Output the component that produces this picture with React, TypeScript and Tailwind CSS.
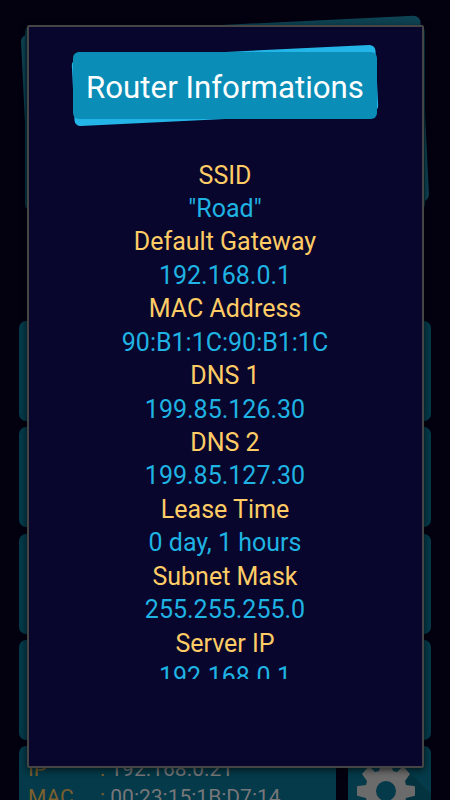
import type { ReactNode } from "react";

const routerInfo = [
  { label: "SSID", value: '"Road"' },
  { label: "Default Gateway", value: "192.168.0.1" },
  { label: "MAC Address", value: "90:B1:1C:90:B1:1C" },
  { label: "DNS 1", value: "199.85.126.30" },
  { label: "DNS 2", value: "199.85.127.30" },
  { label: "Lease Time", value: "0 day, 1 hours" },
  { label: "Subnet Mask", value: "255.255.255.0" },
  { label: "Server IP", value: "192.168.0.1" },
];

export default function App() {
  return (
    <main className="relative h-[800px] w-[450px] overflow-hidden bg-[#030110] font-['Roboto',sans-serif]">
      <DeviceList />
      <div className="absolute inset-0 flex justify-center pt-[25px]">
        <RouterDialog />
      </div>
    </main>
  );
}

function DeviceList() {
  return (
    <div className="flex flex-col px-[19px] pt-[25px]">
      <Tilted
        className="mx-1.5 h-[186px]"
        back="rounded-[7px] bg-[#0e4353]"
        front="rounded-[7px] bg-[#053746]"
      />
      <div className="mt-[110px] flex flex-col gap-[6.3px]">
        <Row />
        <Row />
        <Row />
        <Row />
        <div className="flex h-[100px] gap-3">
          <div className="w-[317px] rounded-[7px] bg-[#043a49] pt-[9px] pl-[9px] text-[21px] leading-[28px] text-[#77777a]">
            <Detail label="IP" value="192.168.0.21" />
            <Detail label="MAC" value="00:23:15:1B:D7:14" />
          </div>
          <div className="flex-1 overflow-hidden rounded-[7px] bg-[#043a49]">
            <GearIcon />
          </div>
        </div>
      </div>
    </div>
  );
}

function Row() {
  return <div className="h-[100px] shrink-0 rounded-[7px] bg-[#043a49]" />;
}

function Detail({ label, value }: { label: string; value: string }) {
  return (
    <div className="flex whitespace-pre">
      <span className="w-[72px] text-[#7d602e]">{label}</span>
      <span className="text-[#7d602e]">: </span>
      <span>{value}</span>
    </div>
  );
}

function GearIcon() {
  return (
    <svg viewBox="0 0 83 100" className="h-[100px] w-[83px]">
      <path d="M58 23 L83 48 V100 H60 L40 80 L56 36 Z" fill="#043340" />
      <g transform="translate(38 45)" fill="#6b6b6b">
        <path
          fillRule="evenodd"
          d="M-5-27H5L7-20L11-19L17-25L24-17L19-10L20-6L28-5Q29-5 29-4V4Q29 5 28 5L20 7L19 11L24 18L17 25L11 20L7 21L5 28H-5L-7 21L-11 20L-17 25L-24 18L-19 11L-20 7L-28 5Q-29 5-29 4V-4Q-29-5-28-5L-20-6L-19-10L-24-17L-17-25L-11-19L-7-20ZM0-10A10 10 0 1 0 0 10A10 10 0 1 0 0-10Z"
        />
      </g>
    </svg>
  );
}

function RouterDialog() {
  return (
    <section className="flex h-[743px] w-[397px] flex-col items-center rounded-[2px] border-2 border-[#454545] bg-[#08062c] pt-[25px] shadow-[0_2px_7px_rgba(0,0,0,0.65)]">
      <Tilted
        className="h-[67px] w-[304px] shrink-0"
        back="rounded-[6px] bg-[#23b5e7]"
        front="rounded-[6px] bg-[#0a8eb8]"
      >
        <h1 className="text-[31.25px] leading-[71px] whitespace-nowrap text-white">
          Router Informations
        </h1>
      </Tilted>

      <dl className="mt-[39px] h-[521px] w-full overflow-hidden pt-[0.5px] text-center text-[25px] leading-[33.43px]">
        {routerInfo.map(({ label, value }) => (
          <div key={label}>
            <dt className="text-[#ffcc66]">{label}</dt>
            <dd className="text-[#1fb3e3]">{value}</dd>
          </div>
        ))}
      </dl>
    </section>
  );
}

// Panel with a second, slightly rotated panel peeking out behind it
function Tilted({
  className,
  back,
  front,
  children,
}: {
  className: string;
  back: string;
  front: string;
  children?: ReactNode;
}) {
  return (
    <div className={`relative ${className}`}>
      <div className={`absolute inset-0 -rotate-[2.8deg] ${back}`} />
      <div className={`relative h-full text-center ${front}`}>{children}</div>
    </div>
  );
}
